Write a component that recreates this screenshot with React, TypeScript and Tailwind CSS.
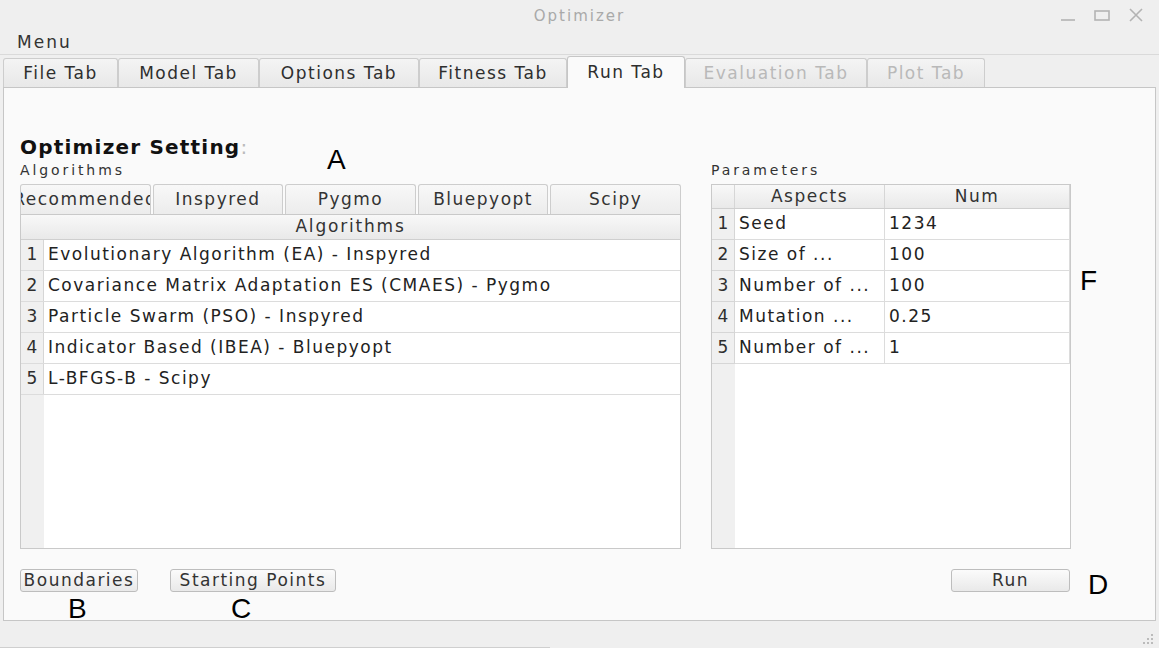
const topTabs = [
  {label: "File Tab", w: 115},
  {label: "Model Tab", w: 141},
  {label: "Options Tab", w: 160},
  {label: "Fitness Tab", w: 148},
  {label: "Run Tab", w: 118, active: true},
  {label: "Evaluation Tab", w: 182, disabled: true},
  {label: "Plot Tab", w: 118, disabled: true},
];

const algoTabs = ["Recommended", "Inspyred", "Pygmo", "Bluepyopt", "Scipy"];

const algorithms = [
  "Evolutionary Algorithm (EA) - Inspyred",
  "Covariance Matrix Adaptation ES (CMAES) - Pygmo",
  "Particle Swarm (PSO) - Inspyred",
  "Indicator Based (IBEA) - Bluepyopt",
  "L-BFGS-B - Scipy",
];

const params = [
  ["Seed", "1234"],
  ["Size of ...", "100"],
  ["Number of ...", "100"],
  ["Mutation ...", "0.25"],
  ["Number of ...", "1"],
];

function Note({children, className}: {children: string; className: string}) {
  return (
    <span className={`absolute font-['Liberation_Sans',sans-serif] text-[28px] leading-none tracking-normal text-black ${className}`}>
      {children}
    </span>
  );
}

function QtButton({children, className}: {children: string; className: string}) {
  return (
    <button
      className={`h-[23px] rounded-[3px] border border-[#bdbdbd] bg-gradient-to-b from-[#fbfbfb] to-[#e9e9e9] text-[17px] leading-none tracking-[1.5px] text-[#333] ${className}`}
    >
      {children}
    </button>
  );
}

export default function App() {
  return (
    <div className="relative flex h-[648px] w-[1159px] flex-col overflow-hidden bg-[#efefef] font-['DejaVu_Sans',sans-serif] text-[17px] tracking-[1.5px] text-[#2e2e2e]">
      {/* title bar */}
      <div className="relative flex h-[30px] items-center justify-center pt-[2px] text-[15px] tracking-[2px] text-[#a9a9a9]">
        Optimizer
        <div className="absolute right-[14px] top-[6px] flex items-center gap-[16px] text-[#b3b3b3]">
          <svg width="18" height="18" viewBox="0 0 18 18">
            <path d="M2 14h14" stroke="currentColor" strokeWidth="1.6" />
          </svg>
          <svg width="18" height="18" viewBox="0 0 18 18">
            <rect x="2" y="5" width="14" height="9" fill="none" stroke="currentColor" strokeWidth="1.6" />
          </svg>
          <svg width="18" height="18" viewBox="0 0 18 18">
            <path d="M3 3l12 12M15 3L3 15" stroke="currentColor" strokeWidth="1.6" />
          </svg>
        </div>
      </div>

      {/* menu bar */}
      <div className="flex h-[25px] items-center border-b border-[#dadada] pl-[17px] pt-[2px] tracking-[2px] text-[#333]">
        Menu
      </div>

      {/* main tabs */}
      <div className="flex h-[32px] items-end pl-[3px]">
        {topTabs.map((t) => (
          <div
            key={t.label}
            style={{width: t.w}}
            className={
              t.active
                ? "relative z-10 -mb-px flex h-[32px] items-center justify-center rounded-t-[3px] border border-b-0 border-[#c6c6c6] bg-[#fafafa] text-[#2e2e2e]"
                : `flex h-[29px] items-center justify-center rounded-t-[3px] border border-b-0 border-[#cdcdcd] bg-gradient-to-b from-[#f4f4f4] to-[#e8e8e8] pt-[2px] ${
                    t.disabled ? "text-[#b9b9b9]" : "text-[#2e2e2e]"
                  }`
            }
          >
            {t.label}
          </div>
        ))}
      </div>

      {/* tab panel */}
      <div className="relative mx-[3px] flex h-[534px] flex-col border border-[#c6c6c6] bg-[#fafafa] pl-[16px]">
        <div className="mt-[47px] h-[26px] text-[20px] font-bold leading-[24px] tracking-[1.2px] text-[#111]">
          Optimizer Setting<span className="font-normal text-[#bbb]">:</span>
        </div>

        <div className="flex gap-[30px]">
          {/* left column */}
          <div className="flex w-[661px] flex-col">
            <div className="h-[23px] text-[14px] leading-[18px] tracking-[2.9px] text-[#333]">Algorithms</div>
            <div className="flex h-[30px] items-end gap-[2px]">
              {algoTabs.map((t) => (
                <div
                  key={t}
                  className="flex h-[30px] w-[131px] items-center justify-center overflow-hidden rounded-t-[3px] border border-b-0 border-[#cdcdcd] bg-gradient-to-b from-[#f8f8f8] to-[#ececec] text-[#333]"
                >
                  <span className="shrink-0 whitespace-nowrap">{t}</span>
                </div>
              ))}
            </div>
            <div className="flex h-[335px] flex-col border border-[#c9c9c9] bg-white">
              <div className="flex h-[25px] items-center justify-center border-b border-[#cfcfcf] bg-gradient-to-b from-[#f8f8f8] to-[#e9e9e9] tracking-[1.8px] text-[#333]">
                Algorithms
              </div>
              {algorithms.map((a, i) => (
                <div key={a} className="flex h-[31px] border-b border-[#dcdcdc]">
                  <div className="flex w-[23px] items-center justify-center border-r border-[#d6d6d6] bg-[#f0f0f0] tracking-normal">
                    {i + 1}
                  </div>
                  <div className="flex items-center whitespace-nowrap pl-[4px] text-[#222]">{a}</div>
                </div>
              ))}
              <div className="flex flex-1">
                <div className="w-[23px] bg-[#f0f0f0]" />
              </div>
            </div>
          </div>

          {/* right column */}
          <div className="flex w-[360px] flex-col">
            <div className="h-[23px] text-[14px] leading-[18px] tracking-[2.9px] text-[#333]">Parameters</div>
            <div className="flex h-[365px] flex-col border border-[#c9c9c9] bg-white">
              <div className="flex h-[24px] border-b border-[#cfcfcf] bg-gradient-to-b from-[#f8f8f8] to-[#e9e9e9] text-[#333]">
                <div className="w-[23px] border-r border-[#d6d6d6]" />
                <div className="flex w-[150px] items-center justify-center border-r border-[#d6d6d6]">Aspects</div>
                <div className="flex w-[185px] items-center justify-center border-r border-[#d6d6d6]">Num</div>
              </div>
              {params.map(([k, v], i) => (
                <div key={i} className="flex h-[31px]">
                  <div className="flex w-[23px] items-center justify-center border-b border-r border-[#d6d6d6] bg-[#f0f0f0] tracking-normal">
                    {i + 1}
                  </div>
                  <div className="flex w-[150px] items-center whitespace-nowrap border-b border-r border-[#dcdcdc] pl-[4px] text-[#222]">
                    {k}
                  </div>
                  <div className="flex w-[185px] items-center border-b border-r border-[#dcdcdc] pl-[4px] text-[#222]">
                    {v}
                  </div>
                </div>
              ))}
              <div className="flex flex-1">
                <div className="w-[23px] bg-[#f0f0f0]" />
              </div>
            </div>
          </div>
        </div>

        {/* buttons */}
        <div className="mt-[20px] flex w-[1050px] items-center">
          <QtButton className="w-[118px]">Boundaries</QtButton>
          <QtButton className="ml-[32px] w-[166px]">Starting Points</QtButton>
          <QtButton className="ml-auto w-[119px]">Run</QtButton>
        </div>

        <Note className="left-[323px] top-[58px]">A</Note>
        <Note className="left-[1076px] top-[179px]">F</Note>
        <Note className="left-[64px] top-[507px]">B</Note>
        <Note className="left-[227px] top-[507px]">C</Note>
        <Note className="left-[1084px] top-[483px]">D</Note>
      </div>

      {/* status bar */}
      <div className="relative flex-1">
        <div className="absolute bottom-0 left-0 h-px w-[550px] bg-[#cfcfcf]" />
        <div className="absolute bottom-[4px] right-[6px] grid grid-cols-3 gap-[2px]">
          {[0, 0, 1, 0, 1, 1, 1, 1, 1].map((on, i) => (
            <span key={i} className={`h-[2px] w-[2px] ${on ? "bg-[#bbb]" : ""}`} />
          ))}
        </div>
      </div>
    </div>
  );
}
